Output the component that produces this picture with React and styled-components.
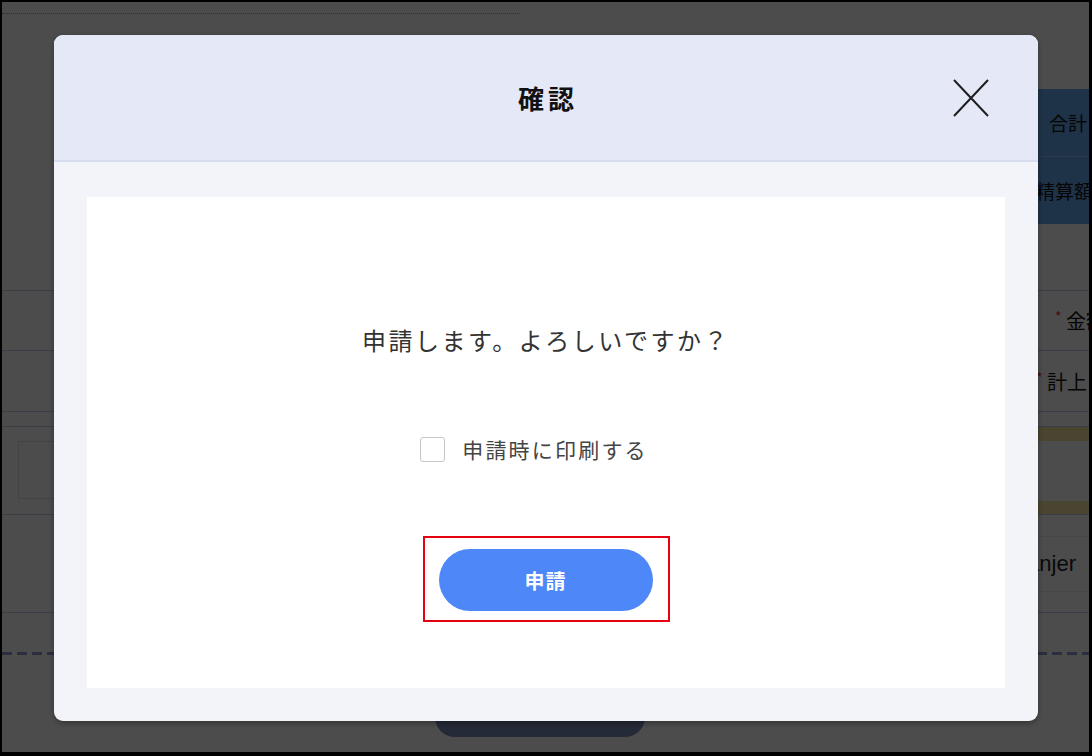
import styled, { createGlobalStyle } from "styled-components";
import { useState } from "react";

const GlobalStyle = createGlobalStyle`
  html, body {
    margin: 0;
    padding: 0;
    height: 100%;
  }
  body {
    font-family: "Noto Sans CJK JP", "Noto Sans", sans-serif;
    overflow: hidden;
  }
  * {
    box-sizing: border-box;
  }
`;

const formRows = [
  { label: "金額", indent: 26, height: 60 },
  { label: "計上日", indent: 7, height: 61 },
];

export default function App() {
  const [print, setPrint] = useState(false);
  return (
    <>
      <GlobalStyle />
      <Page>
        <DottedRule />
        <Summary>
          <SummaryRow $indent={110}>合計</SummaryRow>
          <SummaryRow $indent={97}>精算額</SummaryRow>
        </Summary>
        <Form>
          {formRows.map((r) => (
            <FormRow key={r.label} $height={r.height}>
              <RowLabel $indent={r.indent}>
                <Req>*</Req> {r.label}
              </RowLabel>
            </FormRow>
          ))}
          <ThinRow />
          <NoteRow>
            <InputBox />
            <NoteCell />
          </NoteRow>
          <UserRow>
            <UserCell>Tanaka Manjer</UserCell>
          </UserRow>
        </Form>
        <DashedRule />
        <PageButton />
      </Page>

      <Overlay>
        <Modal>
          <ModalHeader>
            <span />
            <Title>確認</Title>
            <CloseButton aria-label="close">
              <svg width="36" height="38" viewBox="0 0 36 38">
                <path
                  d="M1 1 L35 37 M35 1 L1 37"
                  stroke="#1e1e1e"
                  strokeWidth="2"
                  fill="none"
                />
              </svg>
            </CloseButton>
          </ModalHeader>
          <ModalBody>
            <Panel>
              <Message>申請します。よろしいですか？</Message>
              <CheckRow>
                <Checkbox
                  type="checkbox"
                  checked={print}
                  onChange={() => setPrint(!print)}
                />
                <CheckText>申請時に印刷する</CheckText>
              </CheckRow>
              <Highlight>
                <SubmitButton>申請</SubmitButton>
              </Highlight>
            </Panel>
          </ModalBody>
        </Modal>
      </Overlay>
    </>
  );
}

/* page underneath the dialog */
const Page = styled.div`
  width: 1092px;
  height: 756px;
  overflow: hidden;
  background: #fff;
  border-style: solid;
  border-color: #000;
  border-width: 2px 3px 4px 2px;
  display: flex;
  flex-direction: column;
`;

const DottedRule = styled.div`
  margin-top: 11px;
  width: 518px;
  border-top: 1px dotted #999;
`;

const Summary = styled.div`
  margin-top: 75px;
  align-self: flex-end;
  width: 150px;
  background: #67abee;
  display: flex;
  flex-direction: column;
`;

const SummaryRow = styled.div`
  height: 67px;
  display: flex;
  align-items: center;
  padding-left: ${(p) => p.$indent}px;
  font-size: 19px;
  color: #111;
  white-space: nowrap;
  overflow: hidden;
  & + & {
    border-top: 1px solid #8fc2f3;
    height: 68px;
  }
`;

const Form = styled.div`
  margin-top: 66px;
  display: flex;
  flex-direction: column;
`;

const FormRow = styled.div`
  height: ${(p) => p.$height}px;
  border-top: 1px solid #c1cbe6;
  display: flex;
  align-items: center;
  justify-content: flex-end;
`;

const RowLabel = styled.div`
  width: 60px;
  padding-left: ${(p) => p.$indent}px;
  font-size: 20px;
  color: #111;
  white-space: nowrap;
  overflow: hidden;
`;

const Req = styled.span`
  color: #e53030;
  font-size: 14px;
  vertical-align: top;
`;

const ThinRow = styled.div`
  height: 15px;
  border-top: 1px solid #c1cbe6;
`;

const NoteRow = styled.div`
  height: 88px;
  border-top: 1px solid #c1cbe6;
  display: flex;
  justify-content: space-between;
  align-items: flex-start;
`;

const InputBox = styled.div`
  margin: 14px 0 0 16px;
  width: 300px;
  height: 58px;
  border: 1px solid #e0e0e0;
`;

const NoteCell = styled.div`
  width: 160px;
  height: 87px;
  border-top: 14px solid #f6e7a2;
  border-bottom: 13px solid #f6e7a2;
`;

const UserRow = styled.div`
  height: 99px;
  border-top: 1px solid #c1cbe6;
  border-bottom: 1px solid #c1cbe6;
  display: flex;
  justify-content: flex-end;
  align-items: center;
`;

const UserCell = styled.div`
  width: 160px;
  height: 56px;
  border-top: 1px solid #eceef4;
  border-bottom: 1px solid #eceef4;
  display: flex;
  align-items: center;
  justify-content: flex-end;
  padding-right: 13px;
  font-family: "Liberation Sans", Arial, sans-serif;
  font-size: 22px;
  color: #222;
  white-space: nowrap;
  overflow: hidden;
`;

const DashedRule = styled.div`
  margin-top: 39px;
  height: 3px;
  background: repeating-linear-gradient(
    90deg,
    #8f9bd2 0 10px,
    transparent 10px 15px
  );
`;

const PageButton = styled.div`
  margin: 42px 0 0 433px;
  width: 210px;
  height: 40px;
  border-radius: 20px;
  background: #7b8cb7;
`;

/* dialog */
const Overlay = styled.div`
  position: fixed;
  inset: 0;
  background: rgba(0, 0, 0, 0.7);
  display: flex;
  align-items: center;
  justify-content: center;
`;

const Modal = styled.div`
  width: 984px;
  height: 686px;
  border-radius: 9px;
  overflow: hidden;
  background: #f3f4f9;
  box-shadow: 0 2px 6px rgba(0, 0, 0, 0.35);
  display: flex;
  flex-direction: column;
`;

const ModalHeader = styled.div`
  height: 127px;
  flex-shrink: 0;
  background: #e5e8f7;
  border-bottom: 2px solid #d8dcf1;
  display: grid;
  grid-template-columns: 1fr auto 1fr;
  align-items: center;
`;

const Title = styled.h2`
  margin: 0;
  padding-left: 4px;
  font-size: 26px;
  font-weight: 700;
  letter-spacing: 4px;
  color: #111;
`;

const CloseButton = styled.button`
  justify-self: end;
  margin-right: 49px;
  padding: 0;
  border: 0;
  background: none;
  width: 36px;
  height: 38px;
  display: flex;
  cursor: pointer;
`;

const ModalBody = styled.div`
  flex: 1;
  padding: 35px 33px 33px;
`;

const Panel = styled.div`
  height: 100%;
  background: #fff;
  display: flex;
  flex-direction: column;
  align-items: center;
  padding-top: 125px;
`;

const Message = styled.p`
  margin: 0;
  font-size: 24px;
  line-height: 36px;
  letter-spacing: 2.5px;
  color: #333;
`;

const CheckRow = styled.label`
  margin-top: 78px;
  padding-right: 24px;
  height: 26px;
  display: flex;
  align-items: center;
  gap: 17px;
  cursor: pointer;
`;

const Checkbox = styled.input`
  appearance: none;
  margin: 0;
  width: 25px;
  height: 25px;
  border: 1px solid #c6c6c6;
  border-radius: 3px;
  background: #fff;
`;

const CheckText = styled.span`
  font-size: 21px;
  letter-spacing: 2.2px;
  color: #444;
`;

const Highlight = styled.div`
  margin-top: 74px;
  border: 2px solid #e60012;
  padding: 11px 15px 9px 14px;
`;

const SubmitButton = styled.button`
  width: 214px;
  height: 62px;
  border: 0;
  border-radius: 31px;
  background: #4e87f8;
  color: #fff;
  font-family: inherit;
  font-size: 20px;
  font-weight: 700;
  letter-spacing: 1px;
  cursor: pointer;
`;
